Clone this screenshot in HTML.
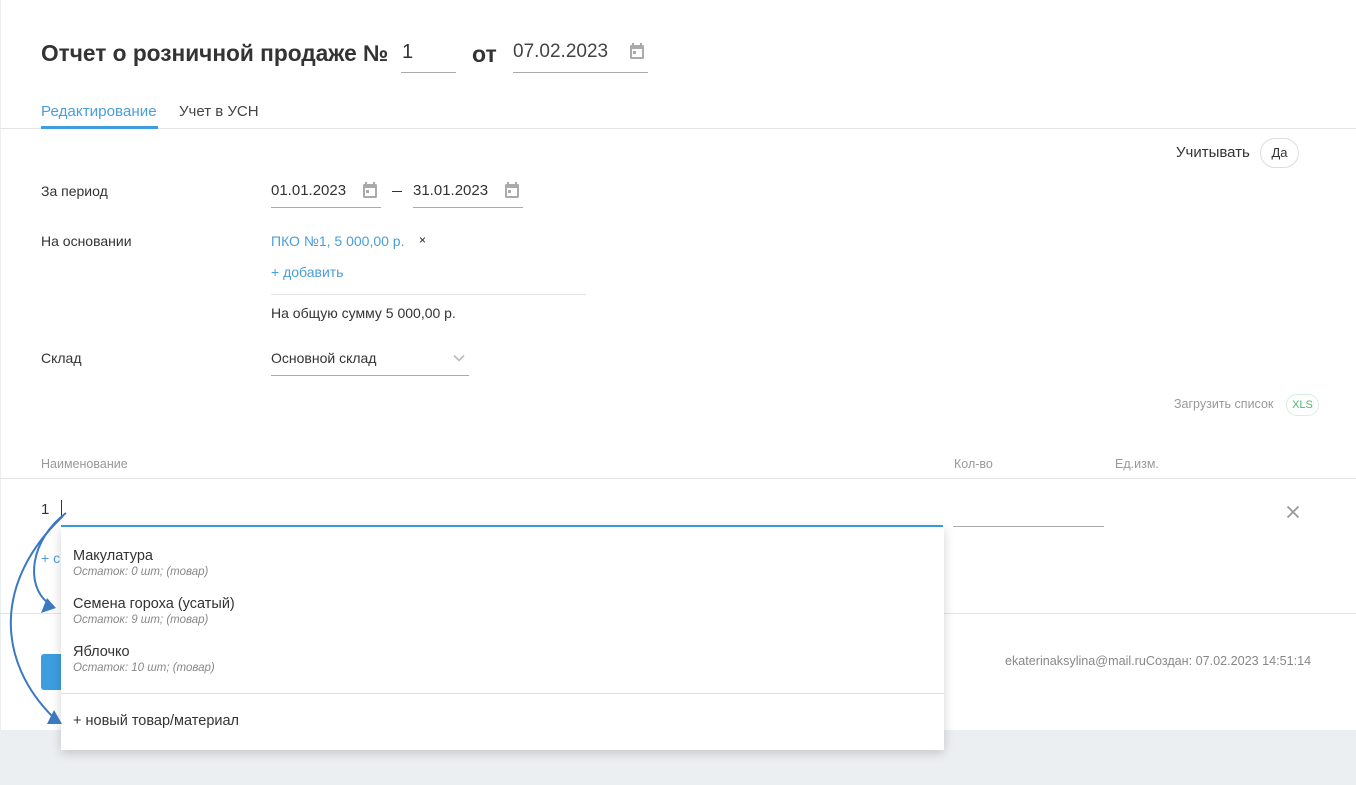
<!DOCTYPE html>
<html><head><meta charset="utf-8"><style>
*{margin:0;padding:0;box-sizing:border-box}
body{width:1356px;height:785px;background:#eceff2;font-family:"Liberation Sans",sans-serif;position:relative;overflow:hidden;color:#333}
.a{position:absolute;white-space:nowrap}
.main{position:absolute;left:1px;top:0;width:1355px;height:730px;background:#fff}
.hl{position:absolute;height:1px;background:#e4e4e4}
.ul{position:absolute;height:1px;background:#aaa}
.cal{position:absolute;width:16px;height:18px}
.lbl{font-size:14px;color:#333}
</style></head><body>
<div class="main"></div>
<div class="a" style="left:41px;top:40px;font-size:22.7px;font-weight:bold;color:#333">Отчет о розничной продаже №</div>
<div class="a" style="left:402px;top:41px;font-size:20px;color:#333">1</div>
<div class="ul" style="left:401px;top:72px;width:55px"></div>
<div class="a" style="left:472px;top:41px;font-size:23px;font-weight:bold">от</div>
<div class="a" style="left:513px;top:41px;font-size:19px;color:#444">07.02.2023</div>
<div class="ul" style="left:513px;top:72px;width:135px"></div>
<svg class="cal" style="left:629px;top:42px" viewBox="0 0 16 18"><rect x="1" y="3" width="14" height="14" rx="1.5" fill="#aaa"/><rect x="3" y="7" width="10" height="8" fill="#fff"/><rect x="4" y="9" width="3" height="3" fill="#aaa"/><rect x="3" y="1" width="2" height="4" fill="#aaa"/><rect x="11" y="1" width="2" height="4" fill="#aaa"/></svg>
<div class="a" style="left:41px;top:103px;font-size:15.2px;color:#4a9ed9">Редактирование</div>
<div class="a" style="left:179px;top:103px;font-size:15px;color:#444">Учет в УСН</div>
<div class="hl" style="left:0;top:128px;width:1356px"></div>
<div class="a" style="left:41px;top:126px;width:117px;height:3px;background:#3d9de0"></div>
<div class="a" style="left:1176px;top:144px;font-size:15px">Учитывать</div>
<div class="a" style="left:1260px;top:138px;width:39px;height:30px;border:1px solid #ddd;border-radius:15px;font-size:13px;text-align:center;line-height:28px">Да</div>
<div class="a lbl" style="left:41px;top:183px">За период</div>
<div class="a" style="left:271px;top:182px;font-size:15px">01.01.2023</div>
<svg class="cal" style="left:362px;top:181px" viewBox="0 0 16 18"><rect x="1" y="3" width="14" height="14" rx="1.5" fill="#aaa"/><rect x="3" y="7" width="10" height="8" fill="#fff"/><rect x="4" y="9" width="3" height="3" fill="#aaa"/><rect x="3" y="1" width="2" height="4" fill="#aaa"/><rect x="11" y="1" width="2" height="4" fill="#aaa"/></svg>
<div class="ul" style="left:271px;top:207px;width:110px"></div>
<div class="a" style="left:392px;top:191px;width:10px;height:1px;background:#333"></div>
<div class="a" style="left:413px;top:182px;font-size:15px">31.01.2023</div>
<svg class="cal" style="left:504px;top:181px" viewBox="0 0 16 18"><rect x="1" y="3" width="14" height="14" rx="1.5" fill="#aaa"/><rect x="3" y="7" width="10" height="8" fill="#fff"/><rect x="4" y="9" width="3" height="3" fill="#aaa"/><rect x="3" y="1" width="2" height="4" fill="#aaa"/><rect x="11" y="1" width="2" height="4" fill="#aaa"/></svg>
<div class="ul" style="left:413px;top:207px;width:110px"></div>
<div class="a lbl" style="left:41px;top:233px">На основании</div>
<div class="a" style="left:271px;top:233px;font-size:14px;color:#4a9ed9">ПКО №1, 5 000,00 р.</div>
<div class="a" style="left:419px;top:233px;font-size:12px;color:#222">×</div>
<div class="a" style="left:271px;top:264px;font-size:14px;color:#4a9ed9">+ добавить</div>
<div class="hl" style="left:271px;top:294px;width:315px"></div>
<div class="a lbl" style="left:271px;top:305px">На общую сумму 5 000,00 р.</div>
<div class="a lbl" style="left:41px;top:350px">Склад</div>
<div class="a lbl" style="left:271px;top:350px">Основной склад</div>
<svg class="a" style="left:453px;top:354px" width="12" height="8" viewBox="0 0 12 8"><path d="M1 1.5l5 5 5-5" stroke="#bbb" stroke-width="1.6" fill="none"/></svg>
<div class="ul" style="left:271px;top:375px;width:198px"></div>
<div class="a" style="left:1174px;top:397px;font-size:12.5px;color:#999">Загрузить список</div>
<div class="a" style="left:1286px;top:394px;width:33px;height:22px;border:1px solid #d5efdf;border-radius:11px;font-size:11px;color:#4cb66e;text-align:center;line-height:20px">XLS</div>
<div class="a" style="left:41px;top:457px;font-size:12.5px;color:#999">Наименование</div>
<div class="a" style="left:954px;top:457px;font-size:12.5px;color:#999">Кол-во</div>
<div class="a" style="left:1115px;top:457px;font-size:12.5px;color:#999">Ед.изм.</div>
<div class="hl" style="left:0;top:478px;width:1356px"></div>
<div class="a" style="left:41px;top:501px;font-size:15px">1</div>
<div class="a" style="left:61px;top:500px;width:1px;height:18px;background:#333"></div>
<div class="a" style="left:61px;top:525px;width:882px;height:2px;background:#3d9de0"></div>
<div class="ul" style="left:953px;top:526px;width:151px"></div>
<svg class="a" style="left:1286px;top:505px" width="14" height="14" viewBox="0 0 14 14"><path d="M1.5 1.5l11 11M12.5 1.5l-11 11" stroke="#999" stroke-width="1.8"/></svg>
<div class="a" style="left:41px;top:550px;font-size:14px;color:#4a9ed9">+ с</div>
<div class="hl" style="left:0;top:613px;width:1356px"></div>
<div class="a" style="left:41px;top:654px;width:30px;height:36px;background:#3d9de0;border-radius:3px"></div>
<div class="a" style="left:1005px;top:654px;font-size:12.6px;color:#888">ekaterinaksylina@mail.ruСоздан: 07.02.2023 14:51:14</div>
<div class="a" style="left:61px;top:527px;width:883px;height:223px;background:#fff;box-shadow:0 3px 10px rgba(0,0,0,.18)">
<div class="a" style="left:12px;top:21px;font-size:14.5px;color:#333">Макулатура</div>
<div class="a" style="left:12px;top:39px;font-size:11.5px;font-style:italic;color:#888">Остаток: 0 шт; (товар)</div>
<div class="a" style="left:12px;top:69px;font-size:14.5px;color:#333">Семена гороха (усатый)</div>
<div class="a" style="left:12px;top:87px;font-size:11.5px;font-style:italic;color:#888">Остаток: 9 шт; (товар)</div>
<div class="a" style="left:12px;top:117px;font-size:14.5px;color:#333">Яблочко</div>
<div class="a" style="left:12px;top:135px;font-size:11.5px;font-style:italic;color:#888">Остаток: 10 шт; (товар)</div>
<div class="hl" style="left:0;top:166px;width:883px;background:#ddd"></div>
<div class="a" style="left:12px;top:186px;font-size:14.5px;color:#333">+ новый товар/материал</div>
</div>
<svg class="a" style="left:0;top:0" width="100" height="785" viewBox="0 0 100 785">
<g stroke="#3a78c2" stroke-width="2" fill="none">
<path d="M66 513 C30 540, 25 585, 48 603"/>
<path d="M63 516 C-5 580, -5 660, 54 718"/>
</g>
<path d="M56 608 L41 613 L47 598 Z" fill="#3a78c2"/>
<path d="M62 724 L47 724 L54 710 Z" fill="#3a78c2"/>
</svg>
</body></html>
